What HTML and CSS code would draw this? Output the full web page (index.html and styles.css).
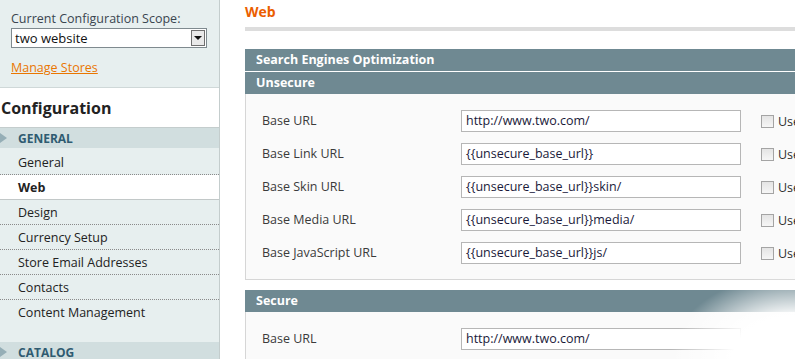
FILE: index.html
```html
<!DOCTYPE html>
<html>
<head>
<meta charset="utf-8">
<link rel="stylesheet" href="styles.css">
</head>
<body>
<div class="page">
  <aside class="side">
    <div class="scope">
      <div class="scope-label">Current Configuration Scope:</div>
      <div class="select">
        <span class="select-text">two website</span>
        <span class="select-btn"><span class="tri"></span></span>
      </div>
      <a class="manage" href="#">Manage Stores</a>
    </div>
    <div class="side-title">Configuration</div>
    <div class="nav-head"><span class="arrow"></span>GENERAL</div>
    <ul class="nav">
      <li>General</li>
      <li class="active">Web</li>
      <li>Design</li>
      <li>Currency Setup</li>
      <li>Store Email Addresses</li>
      <li>Contacts</li>
      <li class="last">Content Management</li>
    </ul>
    <div class="nav-head"><span class="arrow"></span>CATALOG</div>
  </aside>
  <main class="main">
    <h3 class="page-title">Web</h3>
    <div class="title-bar"></div>
    <div class="section-head">Search Engines Optimization</div>
    <div class="section-head sub">Unsecure</div>
    <div class="fieldset">
      <div class="row"><label>Base URL</label><div class="input">http://www.two.com/</div><span class="cb"></span><span class="use">Use Default</span></div>
      <div class="row"><label>Base Link URL</label><div class="input">{{unsecure_base_url}}</div><span class="cb"></span><span class="use">Use Default</span></div>
      <div class="row"><label>Base Skin URL</label><div class="input">{{unsecure_base_url}}skin/</div><span class="cb"></span><span class="use">Use Default</span></div>
      <div class="row"><label>Base Media URL</label><div class="input">{{unsecure_base_url}}media/</div><span class="cb"></span><span class="use">Use Default</span></div>
      <div class="row"><label>Base JavaScript URL</label><div class="input">{{unsecure_base_url}}js/</div><span class="cb"></span><span class="use">Use Default</span></div>
    </div>
    <div class="section-head secure">Secure</div>
    <div class="fieldset">
      <div class="row"><label>Base URL</label><div class="input">http://www.two.com/</div><span class="cb"></span><span class="use">Use Default</span></div>
      <div class="note">Please make sure that Base URL ends with '/' (slash), e.g. http://yourdomain/magento/</div>
    </div>
  </main>
</div>
<div class="fade"></div>
</body>
</html>
```
FILE: styles.css
```css
html, body {
  margin: 0;
  padding: 0;
  overflow: hidden;
  background: #ffffff;
}
body {
  font-family: "Open Sans", "Noto Sans", sans-serif;
  font-size: 12.5px;
  color: #2f2f2f;
  width: 795px;
  height: 359px;
  position: relative;
}
.page {
  display: flex;
  align-items: flex-start;
  width: 1000px;
}
.side {
  width: 219px;
  flex: none;
  border-right: 1px solid #c4cdcd;
  background: #e7efef;
}
.scope {
  padding: 10px 11px 0 11px;
  height: 77px;
  border-bottom: 1px solid #cfd8d8;
}
.scope-label {
  line-height: 17px;
  color: #3a4550;
}
.select {
  margin-top: 1px;
  width: 194px;
  height: 18px;
  border: 1px solid #7f8a8f;
  background: #fff;
  display: flex;
  align-items: center;
  justify-content: space-between;
}
.select-text {
  padding-left: 3px;
  color: #111;
  font-size: 13px;
}
.select-btn {
  width: 12px;
  height: 14px;
  margin-right: 1px;
  border: 1px solid #6f6f6f;
  background: #e9e9e9;
  display: flex;
  align-items: center;
  justify-content: center;
}
.tri {
  width: 0;
  height: 0;
  border-left: 4px solid transparent;
  border-right: 4px solid transparent;
  border-top: 4px solid #111;
}
.manage {
  display: block;
  margin-top: 11px;
  color: #ea7601;
  text-decoration: underline;
  line-height: 17px;
}
.side-title {
  background: #fff;
  height: 39px;
  line-height: 40px;
  font-size: 16px;
  font-weight: bold;
  color: #222;
  padding-left: 1px;
  border-bottom: 1px solid #c4cdcd;
}
.nav-head {
  height: 20px;
  line-height: 21px;
  background: #d1dedf;
  color: #2f5b71;
  font-weight: bold;
  font-size: 12px;
  padding-left: 18px;
  position: relative;
}
.arrow {
  position: absolute;
  left: 0;
  top: 5px;
  width: 0;
  height: 0;
  border-top: 5px solid transparent;
  border-bottom: 5px solid transparent;
  border-left: 7px solid #95aeb6;
}
.nav {
  list-style: none;
  margin: 0;
  padding: 2px 0 0 0;
}
.nav li {
  height: 24px;
  line-height: 25px;
  padding-left: 18px;
  border-bottom: 1px dotted #8a8a8a;
  color: #222;
}
.nav li.active {
  background: #fff;
  font-weight: bold;
  border-bottom: 1px solid #c2c8c8;
}
.nav li.last {
  border-bottom: none;
  height: 42px;
  line-height: 25px;
}
.main {
  flex: none;
  width: 700px;
  padding-left: 25px;
}
.page-title {
  margin: 0;
  height: 27px;
  line-height: 24px;
  font-size: 14px;
  font-weight: bold;
  color: #eb5e00;
}
.title-bar {
  height: 4px;
  background: #dddddd;
  margin-bottom: 18px;
}
.section-head {
  height: 22px;
  line-height: 22px;
  background: #6f8992;
  color: #fff;
  font-weight: bold;
  font-size: 12.5px;
  padding-left: 11px;
}
.section-head.sub {
  border-top: 1px solid #fff;
}
.section-head.secure {
  margin-top: 10px;
}
.fieldset {
  background: #fafafa;
  border: 1px solid #d6d6d6;
  border-top: none;
  padding: 16px 0 15px 16px;
}
.row {
  display: flex;
  align-items: center;
  height: 22px;
  margin-bottom: 11px;
}
.row:last-child {
  margin-bottom: 0;
}
.row label {
  width: 199px;
  color: #3b3b3b;
  margin-top: -2px;
}
.input {
  width: 274px;
  height: 20px;
  line-height: 20px;
  border: 1px solid #b6b6b6;
  background: #fff;
  padding-left: 4px;
  color: #1a1a3a;
}
.cb {
  width: 11px;
  height: 11px;
  border: 1px solid #a4a4a4;
  background: linear-gradient(#e4e4e4, #f6f6f6);
  margin-left: 20px;
  margin-right: 4px;
}
.use {
  color: #2f2f2f;
  white-space: nowrap;
}
.note {
  margin-left: 199px;
  margin-top: 1px;
  color: #2f2f2f;
  line-height: 16px;
}
.fade {
  position: absolute;
  right: 0;
  bottom: 0;
  width: 200px;
  height: 110px;
  background: radial-gradient(ellipse 125px 85px at 100% 100%, rgba(255,255,255,1) 50%, rgba(255,255,255,0) 100%);
  pointer-events: none;
}
```
